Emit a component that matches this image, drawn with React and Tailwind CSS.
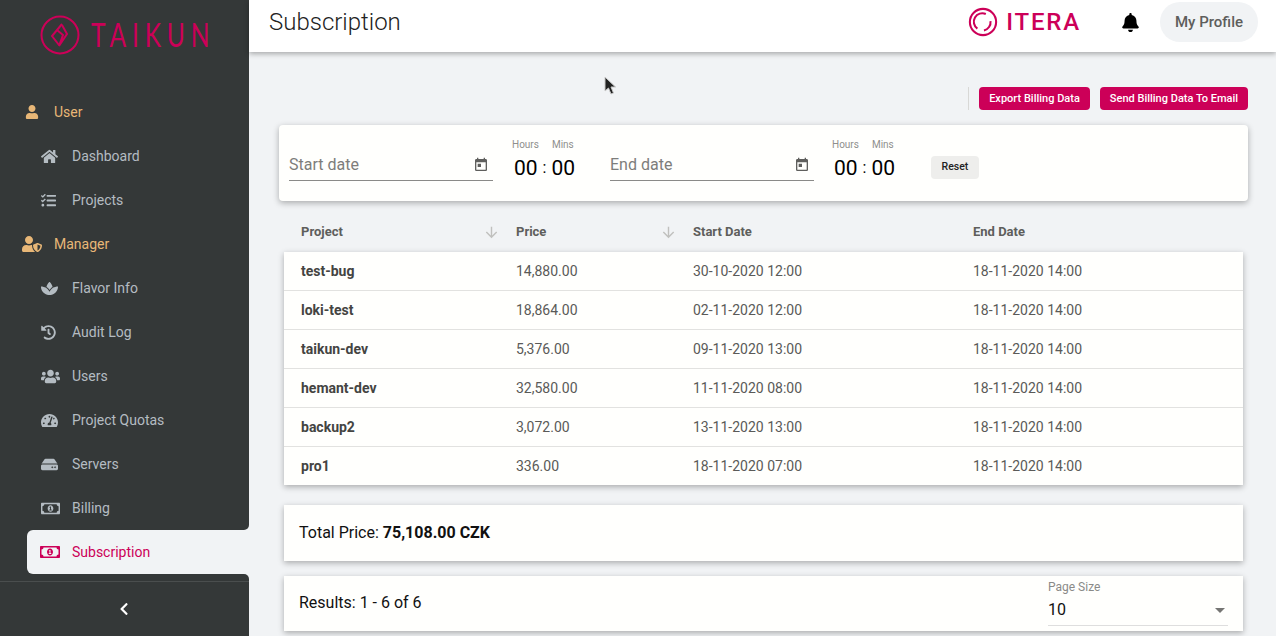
import { FaUser, FaHome, FaTasks, FaUserShield, FaSpa, FaHistory, FaUsers, FaTachometerAlt, FaHdd, FaRegMoneyBillAlt, FaChevronLeft, FaBell } from "react-icons/fa";
import { MdToday, MdArrowDownward, MdArrowDropDown } from "react-icons/md";

const rows = [
  ["test-bug", "14,880.00", "30-10-2020 12:00"],
  ["loki-test", "18,864.00", "02-11-2020 12:00"],
  ["taikun-dev", "5,376.00", "09-11-2020 13:00"],
  ["hemant-dev", "32,580.00", "11-11-2020 08:00"],
  ["backup2", "3,072.00", "13-11-2020 13:00"],
  ["pro1", "336.00", "18-11-2020 07:00"],
];

function NavHeading({ icon: Icon, label, size, pad }) {
  return (
    <div className="h-11 flex items-center text-[#e8b777] text-sm">
      <div className={`w-[54px] shrink-0 ${pad}`}>
        <Icon size={size} />
      </div>
      {label}
    </div>
  );
}

function NavItem({ icon: Icon, label, size = 17 }) {
  return (
    <div className="h-11 flex items-center text-[#b4bcc2] text-sm">
      <div className="w-[72px] pl-[41px] shrink-0">
        <Icon size={size} />
      </div>
      {label}
    </div>
  );
}

function ActiveItem({ icon: Icon, label }) {
  return (
    <div className="relative h-11 ml-[27px] flex items-center bg-[#f1f3f5] text-[#cc0058] text-sm rounded-l-md">
      <div className="absolute right-0 -top-[5px] size-[5px] bg-[#f1f3f5]">
        <div className="size-[5px] bg-[#343838] rounded-br-[5px]" />
      </div>
      <div className="absolute right-0 -bottom-[5px] size-[5px] bg-[#f1f3f5]">
        <div className="size-[5px] bg-[#343838] rounded-tr-[5px]" />
      </div>
      <div className="w-[45px] pl-[13px] shrink-0">
        <Icon size={20} />
      </div>
      {label}
    </div>
  );
}

function Sidebar() {
  return (
    <aside className="w-[249px] h-full bg-[#343838] flex flex-col shrink-0">
      <div className="h-[90px] shrink-0">
        <div className="flex items-center pl-[40px] pt-[15px] gap-[11px] text-[#cc0058]">
          <svg width="40" height="40" viewBox="0 0 40 40" fill="none" stroke="currentColor" strokeWidth="2" className="shrink-0">
            <circle cx="20" cy="20" r="18.5" />
            <path d="M22 9 L12 21 L19 30" />
            <path d="M17 15 L23 20 L19 31 L27 19 L22 10" />
          </svg>
          <span className="text-[32px] tracking-[7.5px] leading-none font-['Lato',sans-serif] origin-left scale-x-[0.77] whitespace-nowrap">TAIKUN</span>
        </div>
      </div>
      <NavHeading icon={FaUser} label="User" size={14} pad="pl-[25px]" />
      <NavItem icon={FaHome} label="Dashboard" />
      <NavItem icon={FaTasks} label="Projects" size={15} />
      <NavHeading icon={FaUserShield} label="Manager" size={20} pad="pl-[22px]" />
      <NavItem icon={FaSpa} label="Flavor Info" />
      <NavItem icon={FaHistory} label="Audit Log" size={15} />
      <NavItem icon={FaUsers} label="Users" size={19} />
      <NavItem icon={FaTachometerAlt} label="Project Quotas" />
      <NavItem icon={FaHdd} label="Servers" />
      <NavItem icon={FaRegMoneyBillAlt} label="Billing" size={19} />
      <ActiveItem icon={FaRegMoneyBillAlt} label="Subscription" />
      <div className="mt-[7px] flex-1 border-t border-[#4a4e4e] flex items-center justify-center text-white pr-[2px]">
        <FaChevronLeft size={14} />
      </div>
    </aside>
  );
}

function DateField({ label }) {
  return (
    <div className="w-[204px] h-[29px] mt-[7px] border-b border-[#8a8a88] flex items-center justify-between pb-[3px] pr-[4px]">
      <span className="text-base text-[#7d7d7b]">{label}</span>
      <MdToday size={16} className="text-[#5f5f5d]" />
    </div>
  );
}

function TimeField() {
  return (
    <div className="w-[70px] text-black -mt-[6px]">
      <div className="flex gap-[13px] text-[10px] text-[#8f8f8d] leading-3 mb-[3px]">
        <span>Hours</span>
        <span>Mins</span>
      </div>
      <div className="flex items-center text-[21px] leading-7 pl-[2px]">
        <span>00</span>
        <span className="mx-[5px] text-base">:</span>
        <span>00</span>
      </div>
    </div>
  );
}

function FilterCard() {
  return (
    <div className="h-[76px] bg-[#fffffd] rounded shadow-[0_2px_6px_rgba(0,0,0,0.3)] flex items-center pl-[10px]">
      <DateField label="Start date" />
      <div className="ml-[19px] mr-[28px]">
        <TimeField />
      </div>
      <DateField label="End date" />
      <div className="ml-[18px] mr-[29px]">
        <TimeField />
      </div>
      <button className="w-12 h-[23px] bg-[#eeeeec] rounded text-[10.5px] font-medium text-[#222] mt-2">Reset</button>
    </div>
  );
}

function BillingTable() {
  return (
    <div className="mx-[5px]">
      <div className="h-10 mt-[11px] grid grid-cols-[215px_177px_280px_1fr] px-[17px] items-center text-[13px] font-bold text-[#5e5e5c]">
        <div className="flex items-center justify-between pr-[16px]">
          Project
          <MdArrowDownward size={17} className="text-[#c0c0be]" />
        </div>
        <div className="flex items-center justify-between pr-[16px]">
          Price
          <MdArrowDownward size={17} className="text-[#c0c0be]" />
        </div>
        <div>Start Date</div>
        <div>End Date</div>
      </div>
      <div className="bg-[#fffffd] shadow-[0_2px_6px_rgba(0,0,0,0.3)]">
        {rows.map(([name, price, start], i) => (
          <div
            key={name}
            className={`grid grid-cols-[215px_177px_280px_1fr] px-[17px] items-center text-sm text-[#5a5a58] ${i > 0 ? "h-[39px] border-t border-[#e2e2e0]" : "h-[38px]"}`}
          >
            <div className="font-bold text-[#444442]">{name}</div>
            <div>{price}</div>
            <div>{start}</div>
            <div>18-11-2020 14:00</div>
          </div>
        ))}
      </div>
    </div>
  );
}

export default function App() {
  return (
    <div className="w-[1276px] h-[636px] flex overflow-hidden bg-[#f1f3f5] font-['Roboto',sans-serif]">
      <Sidebar />
      <div className="flex-1 min-w-0 flex flex-col relative">
        <header className="h-[52px] shrink-0 bg-white shadow-[0_2px_5px_rgba(0,0,0,0.3)] flex items-center pl-5 pr-[18px] z-10">
          <h1 className="text-2xl font-light text-[#222] -mt-[8px]">Subscription</h1>
          <div className="ml-auto flex items-center -mt-[8px]">
            <svg width="30" height="30" viewBox="0 0 32 32" fill="none" stroke="#cc0058" strokeWidth="2.2">
              <circle cx="16" cy="16" r="14" />
              <path d="M19 7.5 A9 9 0 0 0 10 23" />
              <path d="M24 15 A9 9 0 0 1 17 25" />
            </svg>
            <span className="ml-[8px] text-[24px] font-medium leading-none tracking-[1.8px] text-[#cc0058]">ITERA</span>
            <FaBell size={19} className="ml-[40px] text-black" />
            <div className="ml-[20px] w-[98px] h-10 rounded-[20px] bg-[#f1f3f5] flex items-center justify-center text-[15px] font-medium text-[#5e5e5c]">
              My Profile
            </div>
          </div>
        </header>
        <main className="flex-1 min-h-0 pl-[30px] pr-[28px]">
          <div className="h-[73px] flex items-end justify-end pb-[15px]">
            <div className="h-[23px] border-l border-[#d8d8d6] mr-[10px]" />
            <button className="h-[23px] w-[111px] pt-px rounded bg-[#cc0058] text-white text-[11px] font-medium">Export Billing Data</button>
            <button className="h-[23px] w-[148px] pt-px ml-[10px] rounded bg-[#cc0058] text-white text-[11px] font-medium">Send Billing Data To Email</button>
          </div>
          <FilterCard />
          <BillingTable />
          <div className="mx-[5px] mt-5 h-14 px-[15px] bg-[#fffffd] shadow-[0_2px_6px_rgba(0,0,0,0.3)] flex items-center text-base text-[#111]">
            Total Price:&nbsp;<b>75,108.00 CZK</b>
          </div>
          <div className="mx-[5px] mt-[15px] h-[55px] pl-[15px] pr-[15px] bg-[#fffffd] shadow-[0_2px_6px_rgba(0,0,0,0.3)] flex items-center justify-between text-base text-[#111]">
            <span className="-mt-[2px]">Results: 1 - 6 of 6</span>
            <div className="w-[180px] h-full pt-[5px]">
              <div className="text-xs text-[#8a8a88] leading-3">Page Size</div>
              <div className="h-[32px] mt-[1px] border-b border-[#dedede] flex items-center justify-between">
                <span>10</span>
                <MdArrowDropDown size={24} className="text-[#757573] -mr-[4px]" />
              </div>
            </div>
          </div>
        </main>
        <svg width="14" height="20" viewBox="0 0 14 20" className="absolute left-[355px] top-[76px] z-20">
          <path d="M1 1 L1 15 L4.5 12 L7 18 L9.5 17 L7 11 L11.5 11 Z" fill="#222" stroke="#c8c8c8" strokeWidth="1" />
        </svg>
      </div>
    </div>
  );
}
